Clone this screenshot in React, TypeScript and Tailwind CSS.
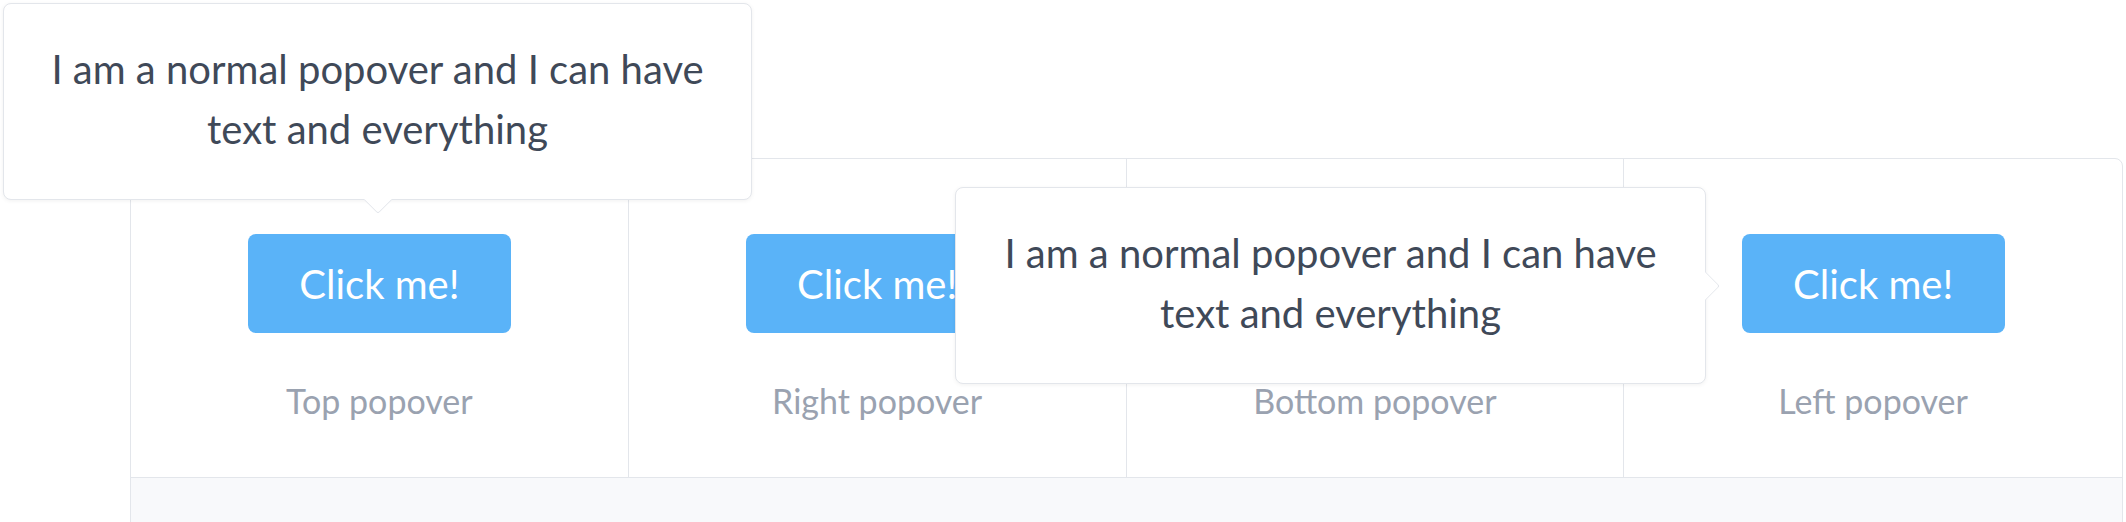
import React from "react";

const font = { fontFamily: "Lato, 'Open Sans', sans-serif" };

function Popover({ className, arrow }: { className: string; arrow: "bottom" | "right" }) {
  return (
    <div
      className={`absolute z-10 rounded-[8px] border border-[#e3e6eb] bg-white px-[40px] pt-[35px] pb-[40px] text-center text-[40px] leading-[60px] text-[#3f4958] shadow-[0_1px_4px_rgba(0,0,0,0.06)] ${className}`}
    >
      I am a normal popover and I can have text and everything
      {arrow === "bottom" ? (
        <span className="absolute -bottom-[11px] left-1/2 h-[20px] w-[20px] -translate-x-1/2 rotate-45 rounded-br-[3px] border-r border-b border-[#e3e6eb] bg-white" />
      ) : (
        <span className="absolute top-1/2 -right-[11px] h-[20px] w-[20px] -translate-y-1/2 -rotate-45 rounded-br-[3px] border-r border-b border-[#e3e6eb] bg-white" />
      )}
    </div>
  );
}

function Cell({ label, last }: { label: string; last?: boolean }) {
  return (
    <div className={`flex flex-col items-center pt-[75px] ${last ? "" : "border-r border-[#e3e6eb]"}`}>
      <button className="h-[99px] w-[263px] rounded-[8px] bg-[#5ab3f8] text-[40px] text-white">Click me!</button>
      <div className="mt-[49px] text-[34px] leading-[38px] text-[#9aa2b0]">{label}</div>
    </div>
  );
}

export default function App() {
  return (
    <div className="relative h-[522px] w-[2126px] overflow-hidden bg-white" style={font}>
      <div className="ml-[130px] mr-[3px] mt-[158px] overflow-hidden rounded-t-[8px] border border-[#e3e6eb]">
        <div className="grid h-[319px] grid-cols-4 border-b border-[#e3e6eb]">
          <Cell label="Top popover" />
          <Cell label="Right popover" />
          <Cell label="Bottom popover" />
          <Cell label="Left popover" last />
        </div>
        <div className="h-[60px] bg-[#f8f9fb]" />
      </div>

      <Popover arrow="bottom" className="left-[3px] top-[3px] w-[749px]" />
      <Popover arrow="right" className="left-[955px] top-[187px] w-[751px]" />
    </div>
  );
}
